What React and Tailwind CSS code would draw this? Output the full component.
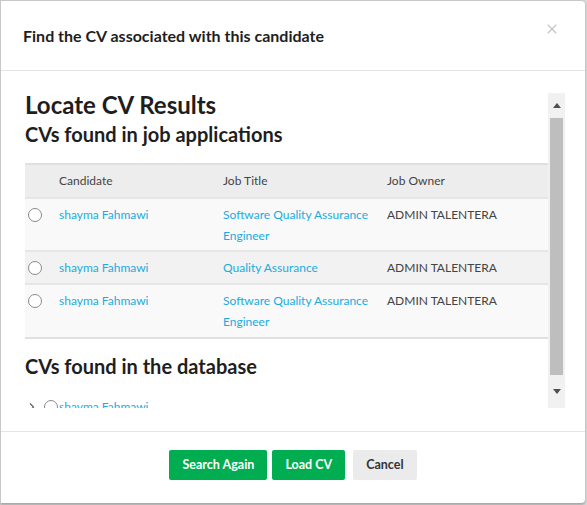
import { X } from 'lucide-react';

const ROWS = [
  { name: 'shayma Fahmawi', job: 'Software Quality Assurance Engineer', owner: 'ADMIN TALENTERA', bg: 'bg-[#f9f9f9]', h: 'h-[53px]' },
  { name: 'shayma Fahmawi', job: 'Quality Assurance', owner: 'ADMIN TALENTERA', bg: 'bg-[#f2f2f2]', h: 'h-[33px]' },
  { name: 'shayma Fahmawi', job: 'Software Quality Assurance Engineer', owner: 'ADMIN TALENTERA', bg: 'bg-[#f9f9f9]', h: 'h-[54px]' },
];

function Radio() {
  return <span className="block w-[14px] h-[14px] rounded-full border border-[#8a8a8a] bg-white" />;
}

export default function App() {
  return (
    <div className="w-[587px] h-[505px] bg-[#d9d9d9] font-['Lato',sans-serif] text-[#333]">
      <div className="w-[585px] h-[503px] bg-white rounded-tr-[4px] rounded-br-[4px] border-l border-t border-[#c8c8c8] shadow-[0_2px_3px_rgba(0,0,0,0.25)] flex flex-col">

        {/* header */}
        <div className="h-[70px] flex items-center justify-between pl-[22px] pr-[25px] border-b border-[#e5e5e5] shrink-0">
          <h4 className="text-[16px] font-bold text-[#1e1e1e]">Find the CV associated with this candidate</h4>
          <X size={16} strokeWidth={1.6} className="text-[#c2c2c2] -mt-[13px]" />
        </div>

        {/* body */}
        <div className="flex-1 pl-[24px] pr-[20px] pt-[22px] pb-[23px] border-b border-[#e5e5e5]">
          <div className="flex h-[315px]">
            <div className="flex-1 flex flex-col">
              <h2 className="text-[24px] font-bold text-[#1e1e1e] leading-[24px]">Locate CV Results</h2>
              <h3 className="text-[20px] font-bold text-[#1e1e1e] leading-[24px] mt-[5px]">CVs found in job applications</h3>

              <div className="mt-[17px] text-[12px]">
                <div className="h-[34px] flex items-center bg-[#ededed] border-t-2 border-[#e0e0e0] text-[#444]">
                  <span className="w-[34px]" />
                  <span className="w-[164px]">Candidate</span>
                  <span className="w-[164px]">Job Title</span>
                  <span>Job Owner</span>
                </div>
                {ROWS.map((r, i) => (
                  <div key={i} className={`${r.h} ${r.bg} flex items-start border-t-2 border-[#e6e6e6] leading-[21px] pt-[5px]`}>
                    <span className="w-[34px] pl-[3px] pt-[4px]"><Radio /></span>
                    <span className="w-[164px] text-[#1aace0]">{r.name}</span>
                    <span className="w-[164px] text-[#1aace0] pr-[10px]">{r.job}</span>
                    <span className="text-[#444]">{r.owner}</span>
                  </div>
                ))}
                <div className="border-t-2 border-[#e0e0e0]" />
              </div>

              <h3 className="text-[20px] font-bold text-[#1e1e1e] leading-[24px] mt-[15px]">CVs found in the database</h3>
              {/* list continues below the fold */}
              <div className="flex-1 overflow-hidden">
                <div className="flex items-center mt-[20px] text-[12px] h-[18px]">
                  <svg width="8" height="10" viewBox="0 0 8 10" className="ml-[3px] mr-[8px]">
                    <path d="M2 1.5 L5.5 5 L2 8.5" fill="none" stroke="#666" strokeWidth="1.3" />
                  </svg>
                  <Radio />
                  <span className="text-[#1aace0] ml-[1px]">shayma Fahmawi</span>
                </div>
              </div>
            </div>

            {/* scrollbar */}
            <div className="w-[17px] bg-[#f1f1f1] flex flex-col items-center">
              <div className="h-[25px] flex items-center justify-center">
                <svg width="8" height="5" viewBox="0 0 8 5"><path d="M0 5 L4 0 L8 5 Z" fill="#505050" /></svg>
              </div>
              <div className="w-[13px] h-[257px] bg-[#bebebe]" />
              <div className="flex-1 flex items-center justify-center">
                <svg width="8" height="5" viewBox="0 0 8 5"><path d="M0 0 L4 5 L8 0 Z" fill="#505050" /></svg>
              </div>
            </div>
          </div>
        </div>

        {/* footer */}
        <div className="h-[72px] flex items-start pt-[18px] justify-center gap-[5px] shrink-0 text-[12.5px] font-bold">
          <button className="h-[30px] px-[13px] rounded-[2px] bg-[#00ad50] text-white">Search Again</button>
          <button className="h-[30px] px-[13px] rounded-[2px] bg-[#00ad50] text-white">Load CV</button>
          <button className="h-[30px] px-[13px] ml-[3px] rounded-[2px] bg-[#ebebeb] text-[#333]">Cancel</button>
        </div>
      </div>
    </div>
  );
}
